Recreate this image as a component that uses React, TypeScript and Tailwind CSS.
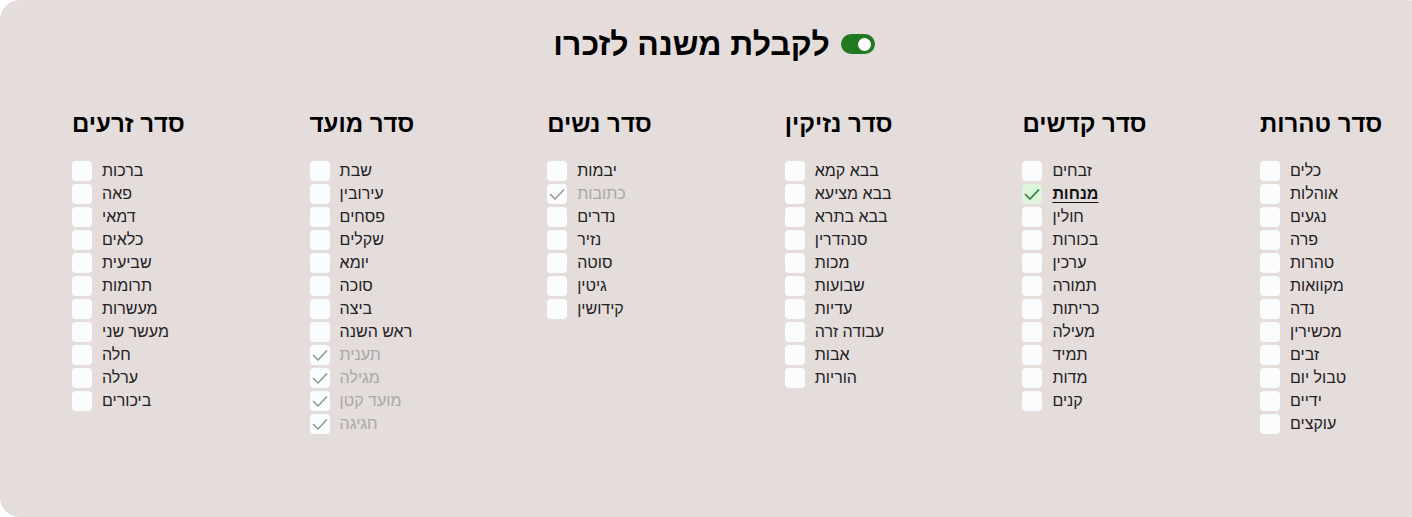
import { useState } from "react";

type Item = { name: string; state?: "done" | "mine" };

const SEDARIM: { title: string; items: Item[] }[] = [
  { title: "סדר זרעים", items: [
    { name: "ברכות" }, { name: "פאה" }, { name: "דמאי" }, { name: "כלאים" }, { name: "שביעית" },
    { name: "תרומות" }, { name: "מעשרות" }, { name: "מעשר שני" }, { name: "חלה" }, { name: "ערלה" }, { name: "ביכורים" },
  ] },
  { title: "סדר מועד", items: [
    { name: "שבת" }, { name: "עירובין" }, { name: "פסחים" }, { name: "שקלים" }, { name: "יומא" }, { name: "סוכה" },
    { name: "ביצה" }, { name: "ראש השנה" }, { name: "תענית", state: "done" }, { name: "מגילה", state: "done" },
    { name: "מועד קטן", state: "done" }, { name: "חגיגה", state: "done" },
  ] },
  { title: "סדר נשים", items: [
    { name: "יבמות" }, { name: "כתובות", state: "done" }, { name: "נדרים" }, { name: "נזיר" }, { name: "סוטה" },
    { name: "גיטין" }, { name: "קידושין" },
  ] },
  { title: "סדר נזיקין", items: [
    { name: "בבא קמא" }, { name: "בבא מציעא" }, { name: "בבא בתרא" }, { name: "סנהדרין" }, { name: "מכות" },
    { name: "שבועות" }, { name: "עדיות" }, { name: "עבודה זרה" }, { name: "אבות" }, { name: "הוריות" },
  ] },
  { title: "סדר קדשים", items: [
    { name: "זבחים" }, { name: "מנחות", state: "mine" }, { name: "חולין" }, { name: "בכורות" }, { name: "ערכין" },
    { name: "תמורה" }, { name: "כריתות" }, { name: "מעילה" }, { name: "תמיד" }, { name: "מדות" }, { name: "קנים" },
  ] },
  { title: "סדר טהרות", items: [
    { name: "כלים" }, { name: "אוהלות" }, { name: "נגעים" }, { name: "פרה" }, { name: "טהרות" }, { name: "מקוואות" },
    { name: "נדה" }, { name: "מכשירין" }, { name: "זבים" }, { name: "טבול יום" }, { name: "ידיים" }, { name: "עוקצים" },
  ] },
];

function Check({ color }: { color: string }) {
  return (
    <svg viewBox="0 0 20 20" className="w-5 h-5" fill="none" stroke={color} strokeWidth={1.7} strokeLinecap="round" strokeLinejoin="round">
      <path d="M3.5 10.5l4.5 4.5 8.5-9" />
    </svg>
  );
}

function Row({ item }: { item: Item }) {
  const box =
    item.state === "mine" ? "bg-[#dcf5dc]" : "bg-[#fbfcfe]";
  return (
    <div className="flex items-center gap-[10px] h-[23px]">
      <div className={`w-5 h-5 rounded-[4px] shrink-0 ${box}`}>
        {item.state === "mine" && <Check color="#2e7d32" />}
        {item.state === "done" && <Check color="#9a9a9a" />}
      </div>
      <span
        className={`text-[16px] leading-none ${
          item.state === "done" ? "text-[#a8a8a8]" : item.state === "mine" ? "font-bold underline underline-offset-[3px] text-[#111]" : "text-[#222]"
        }`}
      >
        {item.name}
      </span>
    </div>
  );
}

export default function App() {
  const [on, setOn] = useState(true);

  return (
    <div className="w-[1412px] h-[517px] overflow-hidden bg-white" style={{ fontFamily: '"Liberation Sans", Arial, sans-serif' }}>
      <div className="w-[1428px] h-[517px] bg-[#e5dcdc] rounded-[20px] pt-[26px]">
        <div className="flex items-center justify-center gap-[11px] h-[36px]">
          <h1 className="text-[32px] font-bold text-black leading-none">לקבלת משנה לזכרו</h1>
          <button
            onClick={() => setOn(o => !o)}
            className={`w-[34px] h-[20px] rounded-full flex items-center px-[4px] ${on ? "bg-[#217a21] justify-end" : "bg-gray-400 justify-start"}`}
          >
            <span className="w-[13px] h-[13px] rounded-full bg-white" />
          </button>
        </div>

        <div className="grid grid-cols-[repeat(6,152px)] gap-x-[85.6px] pl-[72px] mt-[48px]">
          {SEDARIM.map(s => (
            <div key={s.title} className="flex flex-col">
              <h2 className="text-[24px] font-bold text-black leading-none h-[28px] flex items-center">{s.title}</h2>
              <div className="mt-[21px] flex flex-col">
                {s.items.map(it => <Row key={it.name} item={it} />)}
              </div>
            </div>
          ))}
        </div>
      </div>
    </div>
  );
}
